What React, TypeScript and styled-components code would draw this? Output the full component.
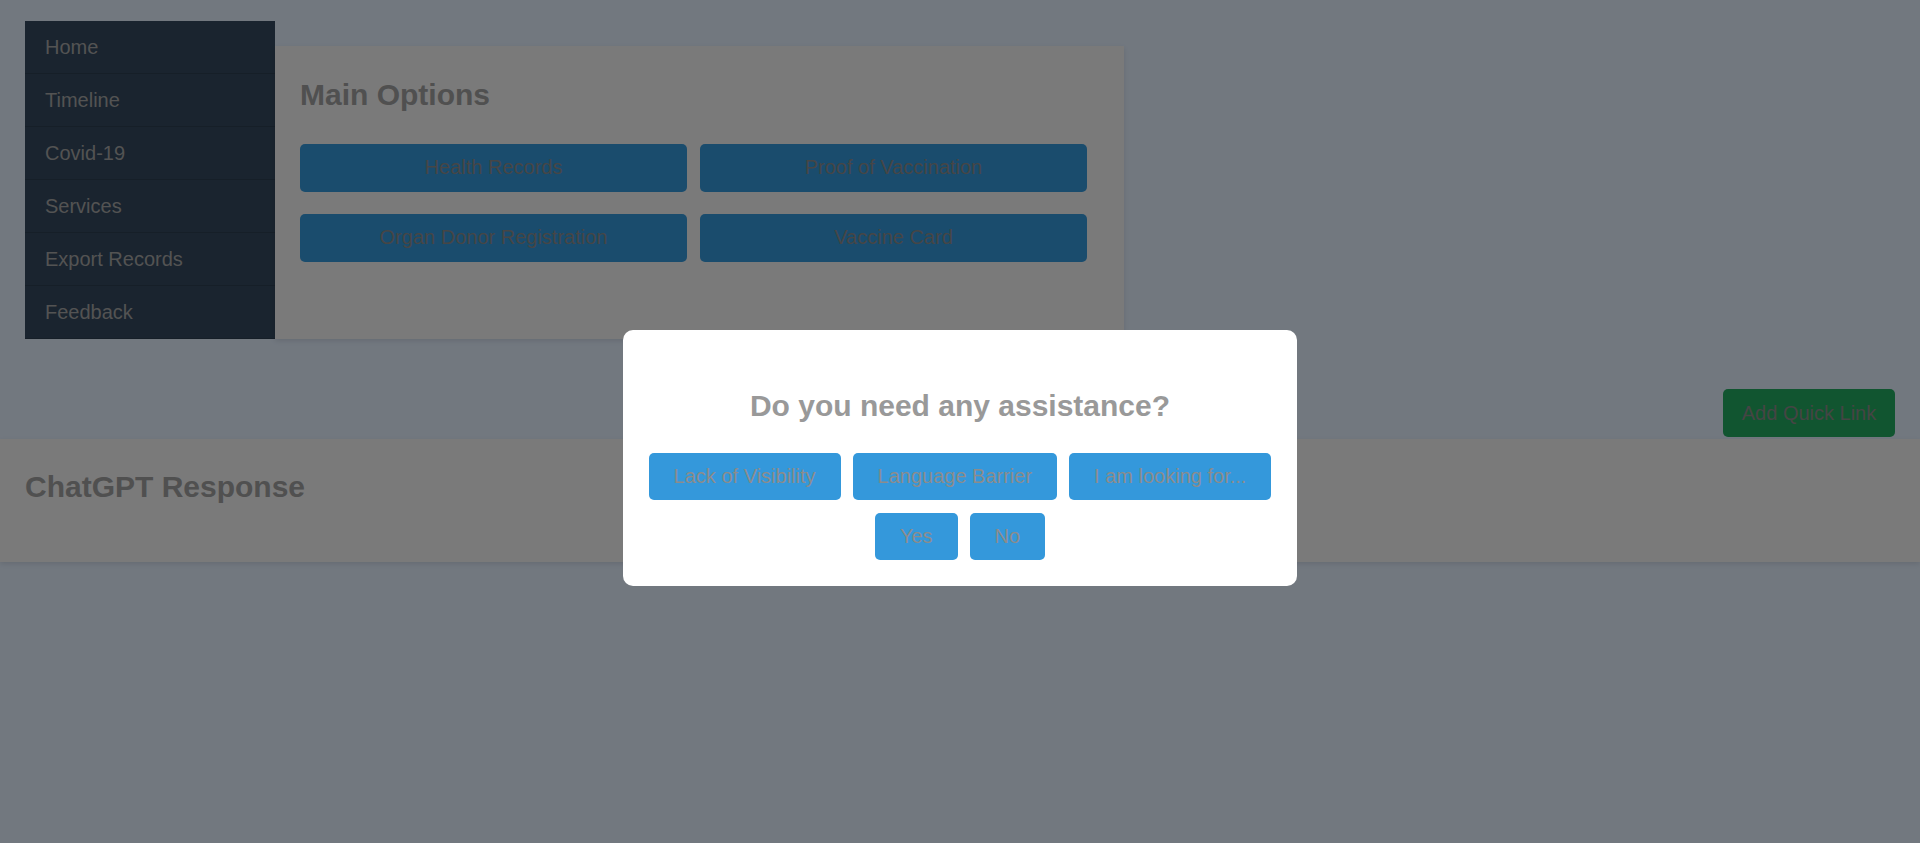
import styled, { createGlobalStyle } from 'styled-components'

const GlobalStyle = createGlobalStyle`
  *, *::before, *::after {
    box-sizing: border-box;
  }

  body {
    margin: 0;
    background: #e4f0ff;
    color: #999;
    font-family: "Liberation Sans", Arial, sans-serif;
  }
`

const Page = styled.div`
  min-height: 843px;
`

const TopRow = styled.div`
  display: flex;
  align-items: stretch;
  padding: 21px 25px 0;
`

const Sidebar = styled.nav`
  width: 250px;
  flex-shrink: 0;
  background: #34495e;
`

const NavItem = styled.div`
  padding: 14.5px 20px;
  border-bottom: 1px solid #2c3e50;
  font-size: 20px;
  line-height: 23px;
  color: #a6a6a6;
`

const Panel = styled.section`
  background: #f4f4f4;
  box-shadow: 0 2px 5px rgba(0, 0, 0, 0.1);
`

const MainPanel = styled(Panel)`
  width: 849px;
  margin-top: 25px;
  padding: 32px 25px 31px;
`

const ResponsePanel = styled(Panel)`
  margin-top: 2px;
  padding: 31px 25px 32px;
`

const Heading = styled.h2<{ $gap: number }>`
  margin: 0 0 ${(p) => p.$gap}px;
  font-size: 30px;
  line-height: 34.5px;
  font-weight: bold;
  color: #a0a0a0;
`

const OptionGrid = styled.div`
  display: grid;
  grid-template-columns: 387px 387px;
  column-gap: 13px;
  row-gap: 22px;
`

const OptionButton = styled.button`
  background: #3498db;
  border: none;
  border-radius: 5px;
  padding: 12.5px;
  font-family: inherit;
  font-size: 20px;
  line-height: 23px;
  color: #8c8c8c;
  white-space: nowrap;
  cursor: pointer;
`

const QuickLinkRow = styled.div`
  display: flex;
  justify-content: flex-end;
  padding: 50px 25px 0;
`

const QuickLinkButton = styled.button`
  background: #23aa60;
  border: none;
  border-radius: 5px;
  padding: 12.5px 18.75px;
  font-family: inherit;
  font-size: 20px;
  line-height: 23px;
  color: #8a8a8a;
  white-space: nowrap;
  cursor: pointer;
`

const Overlay = styled.div`
  position: fixed;
  inset: 0;
  background: rgba(0, 0, 0, 0.5);
  display: flex;
  justify-content: center;
  align-items: flex-start;
  padding-top: 330px;
`

const Modal = styled.div`
  width: 674px;
  background: #fff;
  border-radius: 10px;
  padding: 31px 25px 26px;
  text-align: center;
`

const ModalTitle = styled.h2`
  margin: 27.5px 0 30px;
  font-size: 30px;
  line-height: 34.5px;
  font-weight: bold;
  color: #999;
`

const ChoiceRows = styled.div`
  display: flex;
  flex-direction: column;
  gap: 13px;
`

const ChoiceRow = styled.div`
  display: flex;
  justify-content: center;
  gap: 12px;
`

const ChoiceButton = styled.button`
  flex-shrink: 0;
  background: #3498db;
  border: none;
  border-radius: 5px;
  padding: 12px 25px;
  font-family: inherit;
  font-size: 20px;
  line-height: 23px;
  color: #8c8c8c;
  white-space: nowrap;
  cursor: pointer;
`

const navItems = ['Home', 'Timeline', 'Covid-19', 'Services', 'Export Records', 'Feedback']
const options = ['Health Records', 'Proof of Vaccination', 'Organ Donor Registration', 'Vaccine Card']

const App = () => {
  return (
    <>
      <GlobalStyle />
      <Page>
        <TopRow>
          <Sidebar>
            {navItems.map((item) => (
              <NavItem key={item}>{item}</NavItem>
            ))}
          </Sidebar>
          <MainPanel>
            <Heading $gap={31}>Main Options</Heading>
            <OptionGrid>
              {options.map((option) => (
                <OptionButton key={option}>{option}</OptionButton>
              ))}
            </OptionGrid>
          </MainPanel>
        </TopRow>

        <QuickLinkRow>
          <QuickLinkButton>Add Quick Link</QuickLinkButton>
        </QuickLinkRow>

        <ResponsePanel>
          <Heading $gap={25}>ChatGPT Response</Heading>
        </ResponsePanel>
      </Page>

      <Overlay>
        <Modal>
          <ModalTitle>Do you need any assistance?</ModalTitle>
          <ChoiceRows>
            <ChoiceRow>
              <ChoiceButton>Lack of Visibility</ChoiceButton>
              <ChoiceButton>Language Barrier</ChoiceButton>
              <ChoiceButton>I am looking for...</ChoiceButton>
            </ChoiceRow>
            <ChoiceRow>
              <ChoiceButton>Yes</ChoiceButton>
              <ChoiceButton>No</ChoiceButton>
            </ChoiceRow>
          </ChoiceRows>
        </Modal>
      </Overlay>
    </>
  )
}

export default App
